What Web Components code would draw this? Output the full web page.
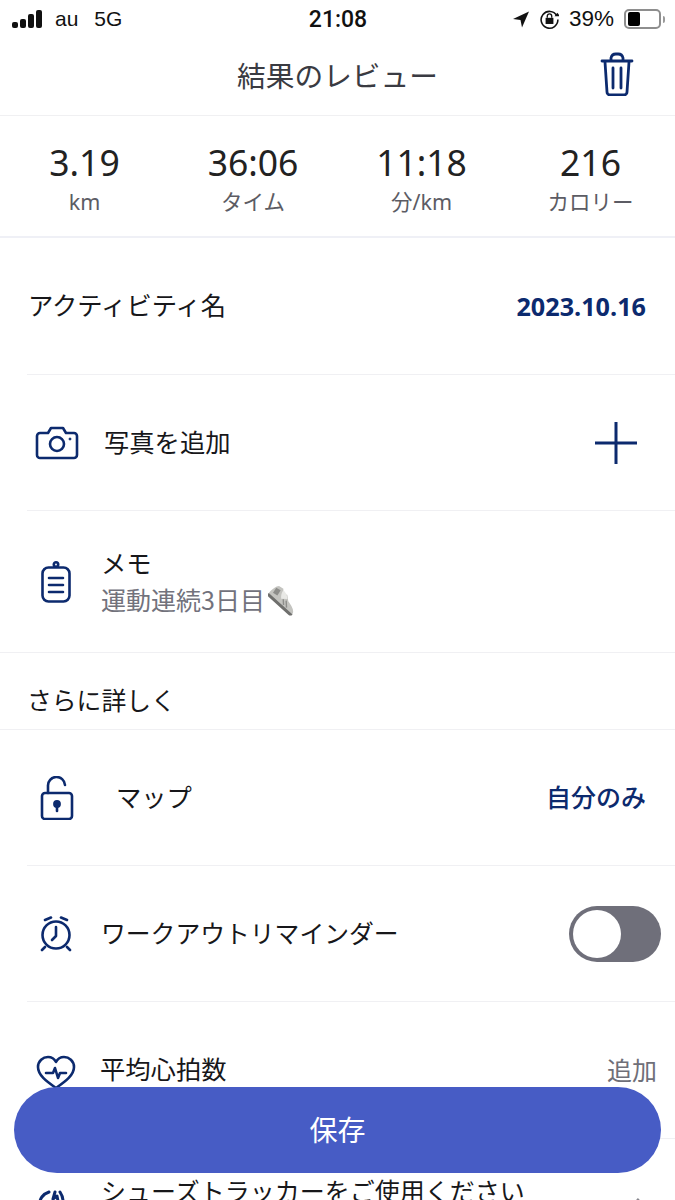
<!DOCTYPE html>
<html lang="ja">
<head>
<meta charset="utf-8">
<title>結果のレビュー</title>
<style>
  html, body { margin: 0; padding: 0; background: #fff; }
  body {
    width: 675px; height: 1200px; overflow: hidden; position: relative;
    font-family: "Noto Sans", "Noto Sans CJK JP", sans-serif; color: #17171a;
  }
</style>
</head>
<body>
<status-bar></status-bar>
<title-bar></title-bar>
<stat-strip>
  <stat-item value="3.19" label="km"></stat-item>
  <stat-item value="36:06" label="タイム"></stat-item>
  <stat-item value="11:18" label="分/km"></stat-item>
  <stat-item value="216" label="カロリー"></stat-item>
</stat-strip>

<list-row height="137" gap="0">
  <span>アクティビティ名</span>
  <span slot="end" style="color:#0c2a6e;font:700 25.200px 'Open Sans',sans-serif">2023.10.16</span>
</list-row>

<list-row height="136" gap="24">
  <svg slot="icon" width="44" height="34" viewBox="0 0 44 34" style="display:block;margin-left:8px;margin-top:1px;fill:none;stroke:#0c2a6e;stroke-width:2.600;stroke-linejoin:round">
    <path d="M5 7h8l3-5h12l3 5h8a3 3 0 0 1 3 3v19a3 3 0 0 1-3 3H5a3 3 0 0 1-3-3V10a3 3 0 0 1 3-3z"/>
    <circle cx="22" cy="18" r="7"/>
    <circle cx="35" cy="13" r="1" fill="#0c2a6e" stroke-width="1"/>
  </svg>
  <span>写真を追加</span>
  <svg slot="end" width="44" height="44" viewBox="0 0 44 44" style="display:block;margin-right:8px;stroke:#0c2a6e;stroke-width:3;fill:none">
    <path d="M22 1v42M1 22h42"/>
  </svg>
</list-row>

<memo-row></memo-row>

<section-label>さらに詳しく</section-label>

<list-row height="136" gap="41">
  <svg slot="icon" width="34" height="44" viewBox="0 0 34 44" style="display:block;margin-left:13px;fill:none;stroke:#0c2a6e;stroke-width:2.600;stroke-linecap:round;stroke-linejoin:round">
    <rect x="2" y="17" width="30" height="26" rx="3"/>
    <path d="M8 17V10a8.500 8.500 0 0 1 17-1"/>
    <circle cx="17" cy="28" r="2.600" fill="#0c2a6e"/>
    <path d="M17 29v6"/>
  </svg>
  <span>マップ</span>
  <span slot="end" style="color:#0c2a6e;font-weight:500;font-size:25px;padding-bottom:4px">自分のみ</span>
</list-row>

<list-row height="136" gap="28">
  <svg slot="icon" width="32" height="36" viewBox="0 0 32 36" style="display:block;margin-left:13px;fill:none;stroke:#0c2a6e;stroke-width:2.600;stroke-linecap:round;stroke-linejoin:round">
    <circle cx="16" cy="19" r="13.500"/>
    <path d="M16 11v9l-4 4"/>
    <path d="M5 4l6-2.500M27 4l-6-2.500M5 31l-3 3M27 31l3 3"/>
  </svg>
  <span style="font-size:24.800px">ワークアウトリマインダー</span>
  <toggle-switch slot="end"></toggle-switch>
</list-row>

<list-row height="137" gap="23">
  <svg slot="icon" width="40" height="36" viewBox="0 0 40 36" style="display:block;margin-left:9px;margin-top:6px;fill:none;stroke:#0c2a6e;stroke-width:2.600;stroke-linecap:round;stroke-linejoin:round">
    <path d="M20 33C10 26 2 20 2 12 2 6 7 2 12 2c4 0 6.500 2 8 5 1.500-3 4-5 8-5 5 0 10 4 10 10 0 8-8 14-18 21z"/>
    <path d="M10 18h7l2-5 3 10 2-5h6"/>
  </svg>
  <span>平均心拍数</span>
  <span slot="end" style="color:#6f6f78;font-size:25px;margin-right:-11px;padding-bottom:2px">追加</span>
</list-row>

<list-row height="62" gap="24" noline>
  <svg slot="icon" width="40" height="40" viewBox="0 0 40 40" style="display:block;margin-left:9px;fill:none;stroke:#0c2a6e;stroke-width:3;stroke-linecap:round;stroke-linejoin:round">
    <path d="M13 3C7 5 3 10 4 16l3 8M19 3l-2 7 4-3 1 5M24 3c2 3 3 6 3 9"/>
  </svg>
  <span style="font-size:25px">シューズトラッカーをご使用ください</span>
  <svg slot="end" width="14" height="24" viewBox="0 0 14 24" style="display:block;margin-right:-3px;fill:none;stroke:#85858c;stroke-width:2.600">
    <path d="M2 2l10 10L2 22"/>
  </svg>
</list-row>

<save-button>保存</save-button>

<script>
  // small helper so every element gets an open shadow root the same way
  class Base extends HTMLElement {
    render(html) {
      if (!this.shadowRoot) this.attachShadow({ mode: 'open' });
      this.shadowRoot.innerHTML = html;
    }
  }

  class StatusBar extends Base {
    connectedCallback() {
      this.render(`
        <style>
          :host { display: flex; align-items: center; justify-content: space-between; height: 38px; padding: 0 10px 0 12px; box-sizing: border-box; font-family: "Liberation Sans", Arial, sans-serif; font-size: 21px; color: #111; position: relative; }
          .left, .right { display: flex; align-items: center; }
          .bars { display: flex; align-items: flex-end; gap: 2px; height: 18px; margin-right: 13px; margin-top: -1px; }
          .bars i { display: block; width: 6px; background: #111; border-radius: 2px; }
          .net { margin-left: 16px; }
          .time { position: absolute; left: 1px; right: 0; text-align: center; font: 500 23px Roboto, sans-serif; }
          svg { display: block; }
          .pct { font-size: 22.500px; }
          .batt { width: 28px; height: 14px; border: 2px solid #8e8e8e; border-radius: 5px; padding: 1px 3px 1px 2px; display: flex; margin-left: 10px; }
          .batt i { display: block; width: 12px; background: #000; border-radius: 2px; }
          .tip { width: 2px; height: 7px; background: #9a9a9a; margin-left: 2px; border-radius: 0 2px 2px 0; }
        </style>
        <div class="left">
          <div class="bars"><i style="height:6px"></i><i style="height:9px"></i><i style="height:14px"></i><i style="height:18px"></i></div>
          <span>au</span><span class="net">5G</span>
        </div>
        <div class="time">21:08</div>
        <div class="right">
          <svg width="16" height="17" viewBox="0 0 16 16" style="margin-right:11px"><path d="M16 0L0 7.500l7.500 1L9 16z" fill="#111"/></svg>
          <svg width="19" height="19" viewBox="1 1.500 17 17" fill="none" stroke="#111" stroke-width="1.400" style="margin-right:10px"><path d="M16 6.500A7.500 7.500 0 1 0 17 10"/><path d="M14 7h5l-2.500-3z" fill="#111" stroke="none"/><rect x="6" y="8.500" width="7" height="5.500" fill="#111" stroke="none"/><path d="M7.500 8.500V7a2 2 0 0 1 4 0v1.500" stroke-width="1.200"/></svg>
          <span class="pct">39%</span>
          <span class="batt"><i></i></span><span class="tip"></span>
        </div>`);
    }
  }

  class TitleBar extends Base {
    connectedCallback() {
      this.render(`
        <style>
          :host { display: flex; align-items: center; justify-content: center; height: 78px; border-bottom: 1px solid #f0f0f2; position: relative; box-sizing: border-box; }
          h1 { margin: 0; font: 400 28.700px "Noto Sans CJK JP", sans-serif; color: #3a3b42; padding-bottom: 4px; }
          button { all: unset; position: absolute; right: 41px; top: 14px; display: block; }
          svg { display: block; fill: none; stroke: #0c2a6e; stroke-width: 2.800; stroke-linecap: round; stroke-linejoin: round; }
        </style>
        <h1>結果のレビュー</h1>
        <button aria-label="delete">
          <svg width="34" height="44" viewBox="0 0 34 44">
            <path d="M2 9h30M11 9V6a5 5 0 0 1 5-4h2a5 5 0 0 1 5 4v3"/>
            <path d="M5 10l2 30a3 3 0 0 0 3 3h14a3 3 0 0 0 3-3l2-30"/>
            <path d="M13 16v20M21 16v20"/>
          </svg>
        </button>`);
    }
  }

  class StatStrip extends Base {
    connectedCallback() {
      this.render(`
        <style>
          :host { display: grid; grid-template-columns: 169px 168px 169px 169px; height: 122px; border-bottom: 2px solid #eff0f6; box-sizing: border-box; }
        </style>
        <slot></slot>`);
    }
  }

  class StatItem extends Base {
    connectedCallback() {
      this.render(`
        <style>
          :host { display: flex; flex-direction: column; align-items: center; padding-top: 24px; }
          .v { font: 400 35.500px/44px "Noto Sans", sans-serif; color: #222; }
          .l { font: 400 21.500px/30px "Noto Sans", "Noto Sans CJK JP", sans-serif; color: #5c5c64; margin-top: 3px; }
        </style>
        <div class="v">${this.getAttribute('value')}</div>
        <div class="l">${this.getAttribute('label')}</div>`);
    }
  }

  class ListRow extends Base {
    connectedCallback() {
      const h = this.getAttribute('height');
      const gap = this.getAttribute('gap');
      const noline = this.hasAttribute('noline');
      // the last row is cut by the bottom of the screen, so it keeps its top alignment and clips
      this.render(`
        <style>
          :host { display: block; margin: 0 0 0 27px; }
          .row { display: flex; align-items: ${noline ? 'flex-start; overflow: hidden' : 'center'}; height: ${h}px; box-sizing: border-box; padding-right: 29px; border-bottom: ${noline ? 0 : 1}px solid #f0f0f3; font: 400 25.300px "Noto Sans CJK JP", sans-serif; color: #17171a; }
          .icon { display: block; flex: none; margin-right: ${gap}px; ${noline ? 'padding-top: 50px;' : ''} }
          .main { flex: 1; margin-left: 1px; white-space: nowrap; ${noline ? 'padding-top: 40px; line-height: 22px;' : 'padding-bottom: 4px;'} }
          .end { flex: none; display: flex; align-items: center; ${noline ? 'padding-top: 58px;' : ''} }
        </style>
        <div class="row">
          <div class="icon"><slot name="icon"></slot></div>
          <div class="main"><slot></slot></div>
          <div class="end"><slot name="end"></slot></div>
        </div>`);
    }
  }

  class MemoRow extends Base {
    connectedCallback() {
      this.render(`
        <style>
          :host { display: block; }
          .row { display: flex; align-items: center; height: 142px; padding-left: 27px; box-sizing: border-box; border-bottom: 1px solid #f0f0f3; }
          svg.clip { display: block; margin-left: 14px; margin-right: 30px; fill: none; stroke: #0c2a6e; stroke-width: 2.600; stroke-linecap: round; stroke-linejoin: round; }
          .txt { padding-bottom: 4px; }
          .t { font: 400 25.300px/38px "Noto Sans CJK JP", sans-serif; color: #17171a; }
          .s { font: 400 25px/34px "Noto Sans CJK JP", sans-serif; color: #72727c; display: flex; align-items: center; }
          .shoe { display: block; margin-left: 3px; margin-top: 3px; }
        </style>
        <div class="row">
          <svg class="clip" width="30" height="42" viewBox="0 0 30 42">
            <rect x="1.500" y="6.500" width="27" height="34" rx="6"/>
            <circle cx="15" cy="3.500" r="2.200"/>
            <path d="M8 17h14M8 24h14M8 31h14"/>
          </svg>
          <div class="txt">
            <div class="t">メモ</div>
            <div class="s">運動連続3日目<svg class="shoe" width="33" height="33" viewBox="0 0 33 33">
              <g transform="rotate(42 16 16)">
                <path d="M0 20c0-4 1-9 3-11l5-1c2 3 5 3 7 2l5 4c4 1 9 2 11 5 1 2 1 3 0 4H2c-1 0-2-1-2-3z" fill="#c4c4c0"/>
                <path d="M9 9l5 1 4 3-5 4c-2-2-4-5-4-8z" fill="#e9e9e6"/>
                <path d="M2 12l5-1 1 6-5 1z" fill="#8d8d8a"/>
                <path d="M18 15l5 5M15 16l4 4" stroke="#8d8d8a" stroke-width="1.400"/>
                <path d="M0 21h32c0 2-1 3-3 3H3c-2 0-3-1-3-3z" fill="#6f6f6d"/>
              </g>
            </svg></div>
          </div>
        </div>`);
    }
  }

  class SectionLabel extends Base {
    connectedCallback() {
      this.render(`
        <style>
          :host { display: flex; align-items: center; height: 77px; padding: 16px 0 0 27px; box-sizing: border-box; border-bottom: 1px solid #f0f0f3; font: 400 24.800px "Noto Sans CJK JP", sans-serif; color: #17171a; }
        </style>
        <slot></slot>`);
    }
  }

  class ToggleSwitch extends Base {
    connectedCallback() {
      this.render(`
        <style>
          :host { display: block; width: 92px; height: 56px; margin-right: -15px; border-radius: 28px; background: #6f6f7a; padding: 4px; box-sizing: border-box; }
          i { display: block; width: 48px; height: 48px; border-radius: 50%; background: #fff; }
        </style>
        <i></i>`);
    }
  }

  class SaveButton extends Base {
    connectedCallback() {
      this.render(`
        <style>
          :host { position: absolute; left: 14px; top: 1087px; width: 647px; height: 86px; padding-bottom: 3px; box-sizing: border-box; border-radius: 43px; background: #475cc5; color: #fff; display: flex; align-items: center; justify-content: center; font: 400 28px "Noto Sans CJK JP", sans-serif; }
        </style>
        <slot></slot>`);
    }
  }

  customElements.define('status-bar', StatusBar);
  customElements.define('title-bar', TitleBar);
  customElements.define('stat-strip', StatStrip);
  customElements.define('stat-item', StatItem);
  customElements.define('list-row', ListRow);
  customElements.define('memo-row', MemoRow);
  customElements.define('section-label', SectionLabel);
  customElements.define('toggle-switch', ToggleSwitch);
  customElements.define('save-button', SaveButton);
</script>
</body>
</html>
